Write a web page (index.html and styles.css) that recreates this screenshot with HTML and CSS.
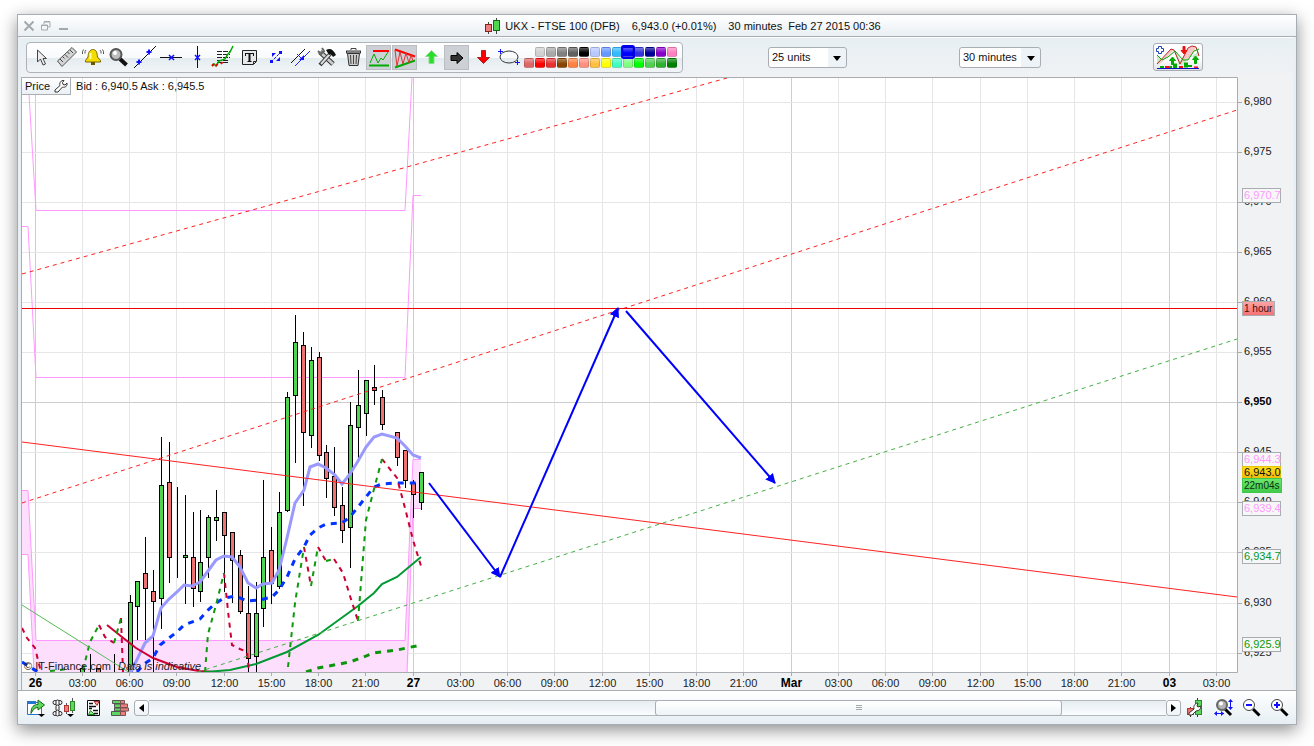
FILE: index.html
```html
<!DOCTYPE html>
<html lang="en">
<head>
    <meta charset="UTF-8">
    <meta name="viewport" content="width=device-width, initial-scale=1.0">
    <title>UKX - FTSE 100 (DFB)</title>
    <link rel="stylesheet" href="styles.css">
</head>
<body>
    <div class="window">
        <header class="titlebar">
            <div class="window-controls">
                <button type="button" aria-label="Close"><svg width="12" height="12" viewBox="0 0 12 12"><path d="M1.500 1.500L10.500 10.500M10.500 1.500L1.500 10.500" stroke="#a4a9ae" stroke-width="2"/></svg></button>
                <button type="button" aria-label="Restore"><svg width="12" height="12" viewBox="0 0 12 12"><path d="M4 4V2h6v5H8M4 1.500h6M1.500 5h6v5h-6zM1.500 5.500h6" fill="none" stroke="#a4a9ae"/></svg></button>
                <button type="button" aria-label="Minimise"><svg width="12" height="12" viewBox="0 0 12 12"><path d="M2 9H11" stroke="#a4a9ae" stroke-width="2"/></svg></button>
            </div>
            <div class="title">
                <svg width="16" height="16" viewBox="0 0 16 16">
                    <path d="M3.500 4v12M11.500 0v16" stroke="#444"/>
                    <rect x="0.500" y="6.500" width="6" height="7" fill="#ef7f7f" stroke="#822"/>
                    <rect x="8.500" y="2.500" width="6" height="10" fill="#4fd64f" stroke="#186618"/>
                </svg>
                <span>UKX - FTSE 100 (DFB)</span>
                <span class="quote">6,943.0 (+0.01%)</span>
                <span class="quote">30 minutes&nbsp; Feb 27 2015 00:36</span>
            </div>
        </header>

        <div class="toolbar">
            <div class="tools">
                <button type="button" aria-label="Select"><svg viewBox="0 0 24 24"><path d="M8.500 5v12l3-3 2.500 6 2.500-1-2.500-5.500h3.500z" fill="#eee" stroke="#444"/></svg></button>
                <button type="button" aria-label="Ruler"><svg viewBox="0 0 24 24"><path d="M2.500 16L17 2.500l4.500 4.500L7 21.500z" fill="#d4d4d4" stroke="#555"/><path d="M5 14l3 3M7.500 11.500l2 2M10 9.500l3 3M12.500 7l2 2M15 5l3 3" stroke="#444"/></svg></button>
                <button type="button" aria-label="Alert"><svg viewBox="0 0 24 24"><path d="M11.500 4.500c-4 1-4 4-4.500 7.500L4.500 15.500v1.500h15v-1.500L16.500 12C16 8 16 5.500 12.500 4.500z" fill="#f4dc00" stroke="#7a6600"/><path d="M9.500 8v6" stroke="#fffbb0" stroke-width="2"/><path d="M10 18.500h4" stroke="#6b5800" stroke-width="3"/><path d="M5 5Q3.500 6.500 4 8.500M2.500 4.500Q1 6.500 1.500 9M19 5Q20.500 6.500 20 8.500M21.500 4.500Q23 6.500 22.500 9" fill="none" stroke="#555"/></svg></button>
                <button type="button" aria-label="Zoom"><svg viewBox="0 0 24 24"><path d="M13 14L19.500 20" stroke="#111" stroke-width="4"/><circle cx="9" cy="9.500" r="5.500" fill="#bdbdbd" stroke="#555" stroke-width="2"/><circle cx="8" cy="8" r="2" fill="#fff"/></svg></button>
                <button type="button" aria-label="Trend line"><svg viewBox="0 0 24 24"><path d="M1 23L23 1" stroke="#111"/><path d="M6 14.500v5M3.500 17h5M16 4.500v5M13.500 7h5" stroke="#11f" stroke-width="2"/></svg></button>
                <button type="button" aria-label="Horizontal line"><svg viewBox="0 0 24 24"><path d="M1 12.500h22" stroke="#111"/><path d="M10 10l5 5M15 10l-5 5" stroke="#11f" stroke-width="1.500"/></svg></button>
                <button type="button" aria-label="Vertical line"><svg viewBox="0 0 24 24"><path d="M12.500 1v22" stroke="#111"/><path d="M10 10l5 5M15 10l-5 5" stroke="#11f" stroke-width="1.500"/></svg></button>
                <button type="button" aria-label="Fibonacci"><svg viewBox="0 0 24 24"><path d="M6 6.500h13M6 9.500h13M6 12.500h13M6 15.500h12M6 17.500h12" stroke="#222" stroke-dasharray="5 1"/><path d="M1 20l2-1 2 2 3-5 6-2 3-5 2-2 3-6" fill="none" stroke="#0a0" stroke-width="1.500"/><path d="M1 21l2-2M5 21l1.500-2M10 19l1.500-2" stroke="#e00" stroke-width="2"/></svg></button>
                <button type="button" aria-label="Text"><svg viewBox="0 0 24 24"><path d="M5.500 5.500h14v11l-3 3h-11z" fill="#e8e8ea" stroke="#222"/><path d="M19 16.500h-2.500v2.500" fill="none" stroke="#222"/><path d="M9 8.500h7M10.500 16.500h4" stroke="#111"/><path d="M12.500 8v9" stroke="#111" stroke-width="2"/><path d="M8.500 8v3M16.500 8v3" stroke="#111"/></svg></button>
                <button type="button" aria-label="Segment"><svg viewBox="0 0 24 24"><path d="M8 17L18 7" stroke="#11f" stroke-dasharray="3 1"/><path d="M9 8h4l-4 4zM17 16h-4l4-4zM7 15h3v3h-3zM16 6h3v3h-3z" fill="#11f"/></svg></button>
                <button type="button" aria-label="Parallel lines"><svg viewBox="0 0 24 24"><path d="M2 18L16 4" stroke="#111"/><path d="M6 21L21 6M8 9l6 6" stroke="#22f"/><path d="M10 15h5v-5z" fill="#11f"/></svg></button>
                <button type="button" aria-label="Drawing settings"><svg viewBox="0 0 24 24"><path d="M5 7L18 19" stroke="#333" stroke-width="5"/><path d="M5 7L18 19" stroke="#ccc" stroke-width="3"/><path d="M5 20L16 8" stroke="#333" stroke-width="4"/><path d="M6 19L15 9" stroke="#ddd" stroke-width="2"/><path d="M11 5c4-2 7-1 10 5l-3 2-2-3-2 1z" fill="#111"/><path d="M3 6l3 3 3-3-2-3" fill="none" stroke="#666" stroke-width="2"/></svg></button>
                <button type="button" aria-label="Delete"><svg viewBox="0 0 24 24"><path d="M6.500 8.500h12l-1.500 12h-9z" fill="#ccc" stroke="#333"/><path d="M5 7h15" stroke="#333" stroke-width="3"/><path d="M6 7h13" stroke="#ccc"/><path d="M10 5V3.500h5V5M9.500 10l.5 9M12.500 10v9M15.500 10l-.5 9" fill="none" stroke="#444"/></svg></button>
                <button type="button" class="pressed" aria-label="Support and resistance"><svg viewBox="0 0 24 24"><path d="M6 5h16" stroke="#f00" stroke-width="2"/><path d="M2 19.500h20" stroke="#0a0" stroke-width="2"/><path d="M3 17l4-9 4 9 3-5 2 2 5-8" fill="none" stroke="#0a0"/></svg></button>
                <button type="button" class="pressed" aria-label="Patterns"><svg viewBox="0 0 24 24"><path d="M2 3.500l20 7" stroke="#f00" stroke-width="2"/><path d="M2 21.500l20-7" stroke="#0a0" stroke-width="2"/><path d="M2 4l2 16L7 6l3 12 3-11 3 10 2-8 2 6" fill="none" stroke="#d33"/></svg></button>
                <button type="button" aria-label="Buy arrow"><svg viewBox="0 0 24 24"><path d="M12.500 5.500l6 6h-3.500v7h-5v-7H6.500z" fill="#2bdd2b" stroke="#8ada8a"/></svg></button>
                <button type="button" class="pressed" aria-label="Arrow"><svg viewBox="0 0 24 24"><path d="M6 9.500h6v-3l6 5.500-6 5.500v-3h-6z" fill="#333" stroke="#000"/></svg></button>
                <button type="button" aria-label="Sell arrow"><svg viewBox="0 0 24 24"><path d="M10.500 5.500h4v7h4l-6 6-6-6h4z" fill="#f00" stroke="#a22"/></svg></button>
                <button type="button" aria-label="Ellipse"><svg viewBox="0 0 24 24"><ellipse cx="12" cy="12" rx="9" ry="6" fill="none" stroke="#333"/><path d="M3.500 4v5M1 6.500h5M20.500 15v5M18 17.500h5" stroke="#11f"/></svg></button>
                <div class="palette" id="palette"></div>
            </div>
            <label class="dropdown units">
                <select aria-label="Units"><option>25 units</option><option>50 units</option><option>100 units</option></select>
            </label>
            <label class="dropdown">
                <select class="wide" aria-label="Time frame"><option>30 minutes</option><option>1 hour</option><option>1 day</option></select>
            </label>
            <button type="button" class="indicator" aria-label="Add indicator">
                <svg width="44" height="24" viewBox="0 0 44 24">
                    <path d="M1 20L15 4l3 1L5 18zM24 17l8-13 4-3 4 1-5 9-9 9z" fill="#f7c8c8"/>
                    <path d="M1 10l5 5-5 5zM18 5l8 12 6-4-6 7h-3zM36 11l7-5v5l-5 2z" fill="#c8ecc8"/>
                    <path d="M1 19L15 4l3 1 6 14 8-16 4-2 4 1 3 9" fill="none" stroke="#b22"/>
                    <path d="M1 10l5 5 6-3 7-6 8 9h5l6-9 5-2" fill="none" stroke="#0a0"/>
                    <path d="M5.500 1.500v2h2v3h-2v2h-3v-2h-2v-3h2v-2z" fill="#fff" stroke="#24b"/>
                    <path d="M16.500 12l3 3.500h-2v4h-2v-4h-2zM39.500 11l3 3.500h-2v4h-2v-4h-2z" fill="#0a0" stroke="#0a0"/>
                    <path d="M28 9l-3-3.500h2v-4h2v4h2z" fill="#e11" stroke="#e11"/>
                    <path d="M9 22h4M23 22h4M38 22.500h4" stroke="#e11" stroke-width="2"/>
                    <path d="M4 22h4M13 22h3M32 21h4" stroke="#0a0" stroke-width="2"/>
                    <path d="M17 21h4M28 20h4" stroke="#0a0" stroke-width="5"/>
                    <path d="M1 23.500h42" stroke="#11c"/>
                </svg>
            </button>
        </div>

        <main class="chart">
            <svg id="chart" viewBox="21 77 1272 613" role="img" aria-label="FTSE 100 price chart">
                <defs>
                    <clipPath id="plotArea"><rect x="22" y="78" width="1215" height="594"/></clipPath>
                    <marker id="head" viewBox="0 0 10 10" refX="9" refY="5" markerWidth="10" markerHeight="10" markerUnits="userSpaceOnUse" orient="auto">
                        <path d="M0 0L10 5L0 10z" fill="#00f"/>
                    </marker>
                    <linearGradient id="redTag" x1="0" y1="0" x2="0" y2="1"><stop offset="0" stop-color="#ffa5a5"/><stop offset="1" stop-color="#f67070"/></linearGradient>
                    <linearGradient id="goldTag" x1="0" y1="0" x2="0" y2="1"><stop offset="0" stop-color="#ffe01a"/><stop offset="1" stop-color="#eeb90c"/></linearGradient>
                    <linearGradient id="greenTag" x1="0" y1="0" x2="0" y2="1"><stop offset="0" stop-color="#6fe76f"/><stop offset="1" stop-color="#3fc94a"/></linearGradient>
                </defs>
                <rect class="plot" x="22" y="78" width="1215" height="594"/>
                <g id="grid"></g>
                <g clip-path="url(#plotArea)" fill="none">
                    <!-- channel bands -->
                    <path class="band" d="M22 490H28L36 640H405L413 459H421V509H413L408 672H34L28 555H22z"/>
                    <path class="channel" d="M22 490.500H28L36 640.500H405L413 459.500H421M22 554.500H28L34 672M407 672L413 508.500H421"/>
                    <path class="channel" d="M28 78L36 210.500H405L412 78M22 226.500H28L36 377.500H405L413 195.500H421"/>
                    <g id="candles"></g>
                    <!-- moving averages -->
                    <path class="ma-light" d="M130 674L145 643L153 636L161 608L169 599L177 592L184 585L192 586L200 582L208 571L216 560L224 556L232 557L240 567L248 583L256 588L263 584L272 583L279 570L287 538L295 503L304 490L310 467L318 464L326 468L335 475L342 484L350 474L358 461L366 447L374 437L382 434L397 438L405 446L413 455L421 458"/>
                    <path class="ma-blue" d="M22 662L38 672M137 672L144 664L153 658L160 645L169 638L177 632L184 625L200 619L208 610L216 603L224 598L236 596L247 601L260 600L272 597L279 590L287 577L295 559L304 547L310 535L318 528L326 524L342 523L350 517L358 507L366 497L374 487L382 484L397 483L421 483"/>
                    <path class="ma-green-dash" d="M306 672L318 668L350 662L374 653L397 650L421 645"/>
                    <path class="crimson" d="M107 625L122 637L136 648L153 658L177 667L199 671L215 672"/>
                    <path class="green" d="M206 672L230 670L256 664L287 652L318 635L358 606L374 593L382 584L397 577L421 557"/>
                    <!-- stop and reverse -->
                    <path class="crimson dash" d="M22 628L27 638L35 648L41 672M99 625L105 637L114 643M121 618L123 672M224 573L229 620L232 645L240 649L247 652L249 672M304 547L311 586M318 547L326 561M334 559L343 573L350 596L358 621M382 459L397 478L405 508L413 540L421 566"/>
                    <path class="green dash" d="M50 671L68 669M83 670L90 642L99 625M114 643L121 618M205 672L208 634L216 605L224 573M288 667L295 603L304 547M311 586L318 547M326 561L334 559M358 621L362 570L366 520L374 489L382 459"/>
                    <!-- drawn lines -->
                    <path class="trend-green" d="M22 605L130 673"/>
                    <path class="trend-green-dash" d="M198 672L1237 339"/>
                    <path class="trend-red trend-dash" d="M22 274L727 78M22 503L1237 110"/>
                    <path class="trend-red" d="M22 442L1237 597"/>
                    <path class="level" d="M22 308.500H1237"/>
                    <path class="forecast" d="M429 483L500 577" marker-end="url(#head)"/>
                    <path class="forecast" d="M500 577L618 308" marker-end="url(#head)"/>
                    <path class="forecast" d="M626 311L775 483" marker-end="url(#head)"/>
                </g>
                <path class="frame" d="M21.500 690V77.500H1237.500V672.500H21.500"/>
                <g id="labels"></g>
                <text x="24" y="670">© IT-Finance.com</text>
                <text x="118" y="670" class="italic">Data is indicative</text>
            </svg>
            <div class="chart-info">
                <button type="button" class="price">Price
                    <svg width="14" height="14" viewBox="0 0 14 14"><path d="M1 11L6 6.500C5 4 7 1 10 1.500L8.500 3.500l.5 2 2 .5L13 4c.5 3-2 5-4.500 4L4 13H1z" fill="#fff" stroke="#333"/></svg>
                </button>
                <span>Bid : 6,940.5 Ask : 6,945.5</span>
            </div>
        </main>

        <footer class="bottombar">
            <button type="button" aria-label="Export"><svg width="20" height="20" viewBox="0 0 20 20"><path d="M1.500 4.500h14v12h-14z" fill="#fff" stroke="#27c"/><path d="M1 4.500h9" stroke="#27c" stroke-width="3"/><path d="M5 15.500c0-7 3-9 7-9V2l6.500 5L12 12V9.500c-3 0-5 2-7 6z" fill="#5fd65f" stroke="#186618"/><path d="M12 16h7l-3.500 3z" fill="#000"/></svg></button>
            <button type="button" aria-label="Link chart"><svg width="26" height="20" viewBox="0 0 26 20"><g fill="#fff" stroke="#222"><circle cx="3" cy="4.500" r="2"/><circle cx="8" cy="4.500" r="2"/><circle cx="3" cy="15.500" r="2"/><circle cx="8" cy="15.500" r="2"/><rect x="4" y="2" width="3" height="6" rx="1.500"/><rect x="4" y="7" width="3" height="6" rx="1.500"/><rect x="4" y="12" width="3" height="6" rx="1.500"/></g><path d="M14.500 5v11M20.500 0v15" stroke="#555"/><rect x="12.500" y="7.500" width="4" height="6" fill="#ef7f7f" stroke="#a33"/><rect x="18.500" y="3.500" width="4" height="9" fill="#5fd65f" stroke="#2a8a2a"/><path d="M15 16h7l-3.500 3z" fill="#000"/></svg></button>
            <button type="button" aria-label="Report"><svg width="20" height="20" viewBox="0 0 20 20"><path d="M3.500 2.500h12v15h-12z" fill="#fff" stroke="#111"/><path d="M5 5.500h4M5 8.500h7M5 10.500h3M9 12.500h5M10 15.500h4" stroke="#111" stroke-width="1.500"/><path d="M10 3.500h5l-2 4z" fill="#f99" stroke="#a33"/><path d="M4.500 16.500l2-4 4 4z" fill="#8e8" stroke="#282"/></svg></button>
            <button type="button" aria-label="Order book"><svg width="20" height="20" viewBox="0 0 20 20"><path d="M2.500 2.500h8v3h-8zM4.500 6h6v3.500h-6zM4.500 10h6v3h-6zM1.500 13.500h9v4h-9z" fill="#5fd65f" stroke="#555"/><path d="M10.500 2.500h4v3h-4zM10.500 6h7v3.500h-7zM10.500 10h8v3h-8zM10.500 13.500h5v4h-5z" fill="#ef7f7f" stroke="#755"/></svg></button>
            <div class="scroller">
                <button type="button" aria-label="Scroll left"><svg width="5" height="8" viewBox="0 0 5 8"><path d="M5 0v8L0 4z"/></svg></button>
                <input type="range" min="0" max="100" value="83" aria-label="Chart position">
                <button type="button" aria-label="Scroll right"><svg width="5" height="8" viewBox="0 0 5 8"><path d="M0 0v8l5-4z"/></svg></button>
            </div>
            <div class="zoom">
                <button type="button" aria-label="Chart settings"><svg width="20" height="20" viewBox="0 0 20 20"><path d="M10.500 0v19M3.500 9v10" stroke="#333"/><rect x="8.500" y="2.500" width="6" height="14" fill="#5fd65f" stroke="#2a8a2a"/><rect x="0.500" y="10.500" width="6" height="6" fill="#ef6f6f" stroke="#b33"/><path d="M2 17v-2l5-4c-1-4 2-6 4-6l-1 3 1 1 3-1c0 3-2 5-5 5l-4 4z" fill="#fff" stroke="#333"/></svg></button>
                <button type="button" aria-label="Fit chart"><svg width="24" height="20" viewBox="0 0 24 20"><path d="M12 11l6 6" stroke="#000" stroke-width="3"/><circle cx="9" cy="7" r="5" fill="#b4b4b4" stroke="#666" stroke-width="2"/><circle cx="8" cy="5.500" r="2" fill="#fff"/><path d="M17.500 3v8M4 15.500h7" stroke="#11f"/><path d="M15 4l2.500-3L20 4zM15 9l2.500 3L20 9zM4 13l-3 2.500L4 18zM8 13l3 2.500L8 18z" fill="#11f"/></svg></button>
                <button type="button" aria-label="Zoom out"><svg width="20" height="20" viewBox="0 0 20 20"><path d="M10 11l6.500 6.500" stroke="#000" stroke-width="3"/><circle cx="6" cy="7" r="5.500" fill="#fff" stroke="#444"/><path d="M3 7h6" stroke="#11f" stroke-width="2"/></svg></button>
                <button type="button" aria-label="Zoom in"><svg width="20" height="20" viewBox="0 0 20 20"><path d="M12 11l6.500 6.500" stroke="#000" stroke-width="3"/><circle cx="8" cy="7" r="5.500" fill="#fff" stroke="#444"/><path d="M5 7h6M8 4v6" stroke="#11f" stroke-width="2"/></svg></button>
            </div>
        </footer>
    </div>
    <script src="chart.js"></script>
</body>
</html>
```
FILE: styles.css
```css
* {
    box-sizing: border-box;
}

body {
    margin: 0;
    padding: 14px 17px 22px;
    background: #fff;
    color: #111;
    font-family: "Liberation Sans", Arial, sans-serif;
    font-size: 11px;
}

button {
    padding: 0;
    border: none;
    background: none;
    font: inherit;
    color: inherit;
    cursor: pointer;
}

svg {
    display: block;
}

.window {
    padding: 0 3px;
    border: 1px solid #a7adb3;
    background: #e8f0f5;
    box-shadow: 0 5px 16px rgba(0, 0, 0, 0.45);
}

.titlebar {
    display: flex;
    height: 22px;
    margin: 0 -3px;
    padding: 0 3px;
    border-bottom: 1px solid #a9aeb3;
    background: linear-gradient(#fff, #e9eff3);
}

.window-controls {
    display: flex;
    align-items: center;
    gap: 5px;
    padding-left: 2px;
}

.title {
    flex: 1;
    display: flex;
    align-items: center;
    justify-content: center;
    padding-left: 4px;
}

.title svg {
    margin-right: 4px;
}

.quote {
    margin-left: 12px;
}

/* toolbar */
.toolbar {
    display: flex;
    align-items: center;
    height: 40px;
    padding: 0 0 1px 5px;
    border-top: 1px solid #fff;
    background: linear-gradient(#e7eff3, #f0f2f4);
}

.tools {
    display: flex;
    align-items: center;
    height: 31px;
    padding: 0 5px 0 1px;
    border: 1px solid #aeb4ba;
    border-radius: 4px;
    background: linear-gradient(#fff 0, #f8fafb 50%, #e3ebef 50%, #f2f5f7 100%);
}

.tools > button {
    width: 25px;
    height: 25px;
    margin-right: 1px;
}

.tools > button svg {
    width: 24px;
    height: 24px;
    margin-left: 1px;
}

.tools > .pressed {
    background: #cdd1d6;
    border: 1px solid #babec3;
}

.tools > .pressed svg {
    margin-left: 0;
}

.palette {
    display: grid;
    grid-template-columns: repeat(14, 10px);
    gap: 1px;
    margin-left: 2px;
}

.palette button {
    height: 10px;
    border-radius: 2px;
    border: 1px solid rgba(0, 0, 0, 0.15);
    background-image: linear-gradient(rgba(255, 255, 255, 0.35), rgba(255, 255, 255, 0) 60%);
}

.palette button:first-child {
    grid-column: 2;
}

.palette .selected {
    position: relative;
    border-radius: 1px;
    box-shadow: 0 0 0 2px #0000f0;
}

.dropdown {
    position: relative;
    margin-left: 112px;
}

.dropdown.units {
    margin-left: 85px;
}

.dropdown select {
    display: block;
    appearance: none;
    width: 79px;
    height: 21px;
    padding: 0 3px;
    border: 1px solid #a9aeb4;
    border-radius: 3px;
    background: linear-gradient(to right, #fff 76%, #edf3f7 76%);
    font: inherit;
    color: inherit;
}

.dropdown .wide {
    width: 82px;
}

.dropdown::after {
    content: "";
    position: absolute;
    right: 6px;
    top: 9px;
    border: 4px solid transparent;
    border-top: 5px solid #000;
    border-bottom: none;
    pointer-events: none;
}

.indicator {
    display: grid;
    place-items: center;
    width: 50px;
    height: 28px;
    margin-left: 112px;
    border: 1px solid #a9aeb4;
    border-radius: 3px;
    background: linear-gradient(#fff 60%, #dfe2e5);
}

/* chart */
.chart {
    position: relative;
    background: #f0f2f4;
}

.chart > svg {
    width: 100%;
}

.chart text {
    font-size: 11px;
    fill: #222;
}

.chart .bold {
    font-weight: bold;
    fill: #000;
}

.chart .day {
    font-size: 12px;
}

.chart .center {
    text-anchor: middle;
}

.chart .small {
    font-size: 10px;
}

.italic {
    font-style: italic;
}

.plot {
    fill: #fff;
}

.frame {
    fill: none;
    stroke: #a9adb2;
}

.grid-line {
    stroke: #e6e6e6;
}

.grid-line.major {
    stroke: #cdcdcd;
}

.tick {
    stroke: #a9adb2;
}

.band {
    fill: #fddffd;
}

.channel {
    stroke: #ff99ff;
}

.wick {
    stroke: #000;
}

.candle {
    stroke: #000;
}

.up {
    fill: #4fd64f;
}

.down {
    fill: #ee7272;
}

.ma-light {
    stroke: #9999ff;
    stroke-width: 3;
}

.ma-blue {
    stroke: #0033ff;
    stroke-width: 3;
    stroke-dasharray: 6 6;
}

.ma-green-dash {
    stroke: #0b950b;
    stroke-width: 3;
    stroke-dasharray: 6 6;
}

.crimson {
    stroke: #cc0033;
    stroke-width: 2;
}

.green {
    stroke: #009933;
    stroke-width: 2;
}

.dash {
    stroke-dasharray: 5 5;
}

.green.dash {
    stroke: #0a9a0a;
}

.trend-red {
    stroke: #ff2222;
}

.trend-dash {
    stroke-dasharray: 4 4;
}

.trend-green {
    stroke: #55bb55;
}

.trend-green-dash {
    stroke: #44b044;
    stroke-dasharray: 4 4;
}

.level {
    stroke: #f00000;
}

.forecast {
    stroke: #0000ff;
    stroke-width: 2;
}

.chart-info {
    position: absolute;
    top: 0;
    left: 0;
    display: flex;
    align-items: center;
    gap: 5px;
}

.price {
    display: flex;
    align-items: center;
    gap: 4px;
    height: 18px;
    padding: 0 2px 0 3px;
    border: 1px solid #a9aeb4;
    background: linear-gradient(#fff, #eaf0f4);
}

/* bottom bar */
.bottombar {
    display: flex;
    align-items: center;
    gap: 2px;
    height: 34px;
    margin: 0 -3px;
    padding: 0 7px 0 6px;
    border-top: 1px solid #a9aeb3;
    background: linear-gradient(#fff, #e6eff4);
}

.bottombar > button {
    padding: 0 2px;
}

.scroller {
    flex: 1;
    display: flex;
    height: 16px;
}

.scroller button {
    display: grid;
    place-items: center;
    width: 15px;
    border: 1px solid #a9aeb4;
    border-radius: 3px;
    background: linear-gradient(#fff, #eef3f6);
}

.scroller input {
    appearance: none;
    flex: 1;
    min-width: 0;
    height: 16px;
    margin: 0;
    border: 1px solid #b3b8bd;
    border-width: 1px 0;
    background: linear-gradient(#e6edf1, #fafcfd);
}

.scroller input::-webkit-slider-thumb {
    appearance: none;
    width: 40%;
    height: 16px;
    border: 1px solid #a9aeb4;
    border-radius: 3px;
    background:
        repeating-linear-gradient(#a4a9ae 0 1px, transparent 1px 2px) center / 6px 5px no-repeat,
        linear-gradient(#fff, #eef3f6);
}

.zoom {
    display: flex;
    gap: 6px;
    margin-left: 4px;
}
```
FILE: chart.js
```js
const svg = (tag, attrs, parent, text) => {
    const el = document.createElementNS('http://www.w3.org/2000/svg', tag);
    for (const key in attrs) el.setAttribute(key, attrs[key]);
    if (text) el.textContent = text;
    parent.appendChild(el);
};

const grid = document.getElementById('grid');
const labels = document.getElementById('labels');
const candleLayer = document.getElementById('candles');

// time axis, one line every three hours
const days = { 0: '26', 8: '27', 16: 'Mar', 24: '03' };
for (let i = 0; i < 26; i++) {
    const x = Math.floor(35 + i * 47.25) + 0.5;
    const day = days[i];
    svg('line', { x1: x, x2: x, y1: 78, y2: 672, class: day ? 'grid-line major' : 'grid-line' }, grid);
    svg('line', { x1: x, x2: x, y1: 672, y2: 676, class: 'tick' }, labels);
    const hour = String((i % 8) * 3).padStart(2, '0') + ':00';
    svg('text', { x: x, y: 687, class: day ? 'center bold day' : 'center' }, labels, day || hour);
}

// price axis
for (let i = 0; i < 12; i++) {
    const y = Math.floor(102 + i * 50.1) + 0.5;
    const price = 6980 - i * 5;
    const major = price === 6950;
    svg('line', { x1: 22, x2: 1237, y1: y, y2: y, class: major ? 'grid-line major' : 'grid-line' }, grid);
    svg('line', { x1: 1238, x2: 1242, y1: y, y2: y, class: 'tick' }, labels);
    svg('text', { x: 1244, y: Math.floor(y) + 3, class: major ? 'bold' : '' }, labels, price.toLocaleString('en-US'));
}

// slot, high, open/close top, open/close bottom, low, direction
const candles = [
    [6, 665, 668, 672, 672, 'up'], [7, 654, 672, 673, 672, 'up'], [8, 668, 668, 672, 672, 'down'],
    [10, 654, 672, 673, 672, 'up'], [12, 595, 602, 674, 674, 'up'], [13, 581, 581, 606, 640, 'up'],
    [14, 537, 573, 588, 640, 'down'], [15, 570, 591, 601, 672, 'down'], [16, 437, 485, 598, 629, 'up'],
    [17, 442, 482, 557, 583, 'down'], [18, 487, 560, 560, 578, 'up'], [19, 495, 555, 557, 604, 'up'],
    [20, 512, 557, 588, 607, 'down'], [21, 510, 562, 591, 602, 'up'], [22, 515, 517, 557, 578, 'up'],
    [23, 490, 517, 520, 541, 'up'], [24, 512, 512, 535, 592, 'down'], [25, 532, 532, 560, 603, 'down'],
    [26, 550, 555, 611, 614, 'down'], [27, 586, 613, 658, 672, 'down'], [28, 582, 613, 656, 672, 'up'],
    [29, 480, 557, 608, 627, 'up'], [30, 527, 550, 583, 604, 'down'], [31, 492, 512, 586, 589, 'up'],
    [32, 392, 397, 510, 512, 'up'], [33, 315, 342, 395, 463, 'up'], [34, 332, 345, 432, 506, 'down'],
    [35, 347, 360, 435, 448, 'up'], [36, 352, 357, 455, 461, 'down'], [37, 445, 452, 478, 498, 'down'],
    [38, 447, 476, 507, 516, 'down'], [39, 487, 505, 530, 543, 'down'], [40, 402, 425, 527, 568, 'up'],
    [41, 370, 405, 427, 458, 'up'], [42, 380, 380, 413, 436, 'up'], [43, 365, 387, 390, 405, 'down'],
    [44, 390, 397, 424, 430, 'down'], [46, 432, 432, 457, 466, 'down'], [47, 450, 450, 480, 488, 'down'],
    [48, 480, 483, 494, 518, 'down'], [49, 472, 472, 502, 510, 'up']
];
candles.forEach(([slot, high, top, bottom, low, direction]) => {
    const x = Math.round(35 + slot * 7.875) + 0.5;
    svg('line', { x1: x, x2: x, y1: high, y2: low, class: 'wick' }, candleLayer);
    svg('rect', { x: x - 2, y: top + 0.5, width: 4, height: bottom - top, class: 'candle ' + direction }, candleLayer);
});

// price tags over the axis
const tags = [
    [188, 38, 14, '6,970.7', '#ff99ff', '#f7f7f7', '#a9adb2'],
    [301, 32, 14, '1 hour', '#3a1010', 'url(#redTag)', '#a9adb2', 'small'],
    [452, 38, 14, '6,944.3', '#ff99ff', '#f7f7f7', '#a9adb2'],
    [466, 38, 12, '6,943.0', '#111', 'url(#goldTag)', '#e8c010'],
    [478, 39, 14, '22m04s', '#0a330a', 'url(#greenTag)', '#3fc94a', 'small'],
    [501, 38, 14, '6,939.4', '#ff99ff', '#f7f7f7', '#a9adb2'],
    [549, 38, 14, '6,934.7', '#009933', '#f7f7f7', '#a9adb2'],
    [637, 38, 14, '6,925.9', '#0a9a0a', '#f7f7f7', '#a9adb2']
];
tags.forEach(([y, width, height, text, color, fill, stroke, size]) => {
    svg('rect', { x: 1242.5, y: y + 0.5, width: width, height: height, fill: fill, stroke: stroke }, labels);
    svg('text', { x: 1244, y: y + height - 3 + (height < 14 ? 1 : 0), style: 'fill:' + color, class: size || '' }, labels, text);
});

// drawing colours
const colors = [
    '#d0d0d0', '#a8a8a8', '#808080', '#606060', '#000000', '#b8c8ff', '#6699ff', '#33bbff', '#0000ff', '#3333dd', '#000099', '#8800cc', '#ff80c0',
    '#dd6666', '#ff0000', '#e83030', '#884400', '#ff8040', '#ff9080', '#ffc040', '#ffff00', '#40ffc0', '#80ff80', '#00ff00', '#50d050', '#30b030', '#008000'
];
const palette = document.getElementById('palette');
colors.forEach(color => {
    const button = document.createElement('button');
    button.type = 'button';
    button.style.backgroundColor = color;
    button.setAttribute('aria-label', 'Colour ' + color);
    if (color === '#0000ff') button.className = 'selected';
    palette.appendChild(button);
});
```
